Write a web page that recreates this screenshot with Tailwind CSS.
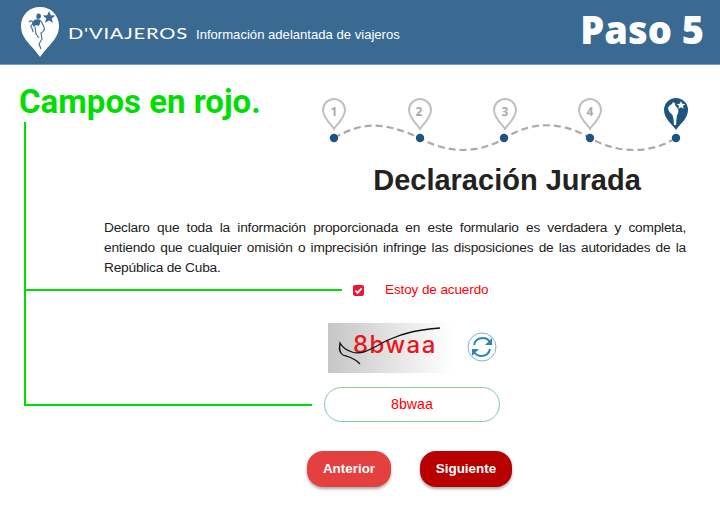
<!DOCTYPE html>
<html lang="es">
<head>
    <meta charset="UTF-8">
    <title>Paso 5</title>
    <script src="https://cdn.jsdelivr.net/npm/@tailwindcss/browser@4"></script>
</head>
<body class="bg-white w-[720px] h-[510px] overflow-hidden relative font-['Liberation_Sans',sans-serif]">
    <!-- header -->
    <header class="h-[65px] bg-[#3a6a92] border-b border-[#7f9db6] flex items-center pl-[20px] pr-[16px]">
        <svg class="w-[40px] h-[50px] shrink-0" viewBox="0 0 40 50">
            <path d="M20 0C9 0 1 8 1 19c0 8 4 13 9 19 4 4 7 8 10 12 3-4 6-8 10-12 5-6 9-11 9-19C39 8 31 0 20 0Z" fill="#fff"/>
            <path d="M29 4l1.800 4.200 4.400.3-3.400 2.900 1.100 4.400-3.900-2.400-3.900 2.400 1.100-4.400-3.400-2.900 4.400-.3Z" fill="#3a6a92"/>
            <path d="M17 7c2-1 4 0 4 2s-1 3-3 3-2-3-1-5ZM14 13c2-1 5-1 7 0l-2 6-3-1-2 2-2-3Z" fill="#3a6a92"/>
            <path d="M9 15c2-2 4-1 4 1s-3 2-2 4 2 2 2 5M21 14l3 6c1 3-1 5-3 6l1 6-3 5 2 5M15 20l1 7 3 4" fill="none" stroke="#3a6a92" stroke-width="1.100"/>
        </svg>
        <span class="mt-[4px] ml-[8px] text-[15.500px] leading-none tracking-[0.6px] text-white font-['Lato',sans-serif] scale-x-[1.3] origin-left w-[128px] shrink-0">D'VIAJEROS</span>
        <span class="mt-[5px] text-[13.100px] text-white">Información adelantada de viajeros</span>
        <span class="ml-auto mb-[6px] text-[38px] leading-none font-black text-white font-['Noto_Sans',sans-serif]">Paso 5</span>
    </header>

    <!-- contenido -->
    <main class="pt-[33px] pl-[104px] pr-[34px]">
        <svg class="block ml-[216px] w-[370px] h-[56px]" viewBox="320 98 370 56">
            <path d="M334 138C362 122 382 121 420 138C448 154 478 154 505 138C530 122 560 120 590 138C618 154 650 154 676 138" fill="none" stroke="#aaa" stroke-width="2.200" stroke-dasharray="7 4"/>
            <g fill="#fff" stroke="#c0c0c0" stroke-width="2">
                <path d="M334 129c-3-5-11-11-11-19a11 11 0 0 1 22 0c0 8-8 14-11 19Z"/>
                <path d="M420 129c-3-5-11-11-11-19a11 11 0 0 1 22 0c0 8-8 14-11 19Z"/>
                <path d="M505 129c-3-5-11-11-11-19a11 11 0 0 1 22 0c0 8-8 14-11 19Z"/>
                <path d="M590 129c-3-5-11-11-11-19a11 11 0 0 1 22 0c0 8-8 14-11 19Z"/>
            </g>
            <g fill="#aaa" font-family="Open Sans" font-weight="700" font-size="12" text-anchor="middle">
                <text x="334" y="116">1</text>
                <text x="419" y="116">2</text>
                <text x="505" y="116">3</text>
                <text x="590" y="116">4</text>
            </g>
            <path d="M676 130c-3-5-12-11-12-20a12 12 0 0 1 24 0c0 9-9 15-12 20Z" fill="#1f5480"/>
            <path d="M681 101l1.200 2.800 3 .2-2.300 1.900.8 2.900-2.700-1.600-2.700 1.600.8-2.900-2.300-1.900 3-.2Z" fill="#fff"/>
            <path d="M672 103c2-1 4 0 3 2l3 4c1 3 0 5-1 6l-.5 4-.5 6h-2l-.5-6-1-4-3-3c-1-2-2-4-1-5 1-2 3-2 4-4Z" fill="#fff"/>
            <g fill="#1f5480">
                <circle cx="334" cy="138" r="4.200"/>
                <circle cx="420" cy="138" r="4.200"/>
                <circle cx="504" cy="138" r="4.200"/>
                <circle cx="590" cy="138" r="4.200"/>
                <circle cx="676" cy="138" r="4.200"/>
            </g>
        </svg>

        <h1 class="mt-[9px] ml-[217px] w-[372px] text-center text-[29px] leading-[34px] font-bold text-[#222]">Declaración Jurada</h1>

        <p class="mt-[21px] text-[13.700px] tracking-[-0.2px] leading-[20px] text-[#222] text-justify">Declaro que toda la información proporcionada en este formulario es verdadera y completa, entiendo que cualquier omisión o imprecisión infringe las disposiciones de las autoridades de la República de Cuba.</p>

        <label class="mt-[2px] ml-[249px] flex items-center gap-[21px] h-[20px]">
            <span class="w-[11px] h-[11px] rounded-[2px] bg-[#f0142f] flex items-center justify-center">
                <svg class="w-[9px] h-[9px]" viewBox="0 0 10 10"><path d="M1.500 5.200l2.500 2.500 4.500-5" fill="none" stroke="#fff" stroke-width="2"/></svg>
            </span>
            <span class="text-[13.500px] tracking-[-0.1px] text-[#f00]">Estoy de acuerdo</span>
        </label>

        <div class="mt-[23px] ml-[224px] flex items-center gap-[15px]">
            <div class="relative w-[124px] h-[50px] bg-linear-to-r from-[#c6c6c6] to-white overflow-hidden">
                <span class="absolute left-[25px] top-[7px] text-[24px] leading-[30px] tracking-[1.400px] font-medium text-[#e8161e] font-['Inter',sans-serif]">8bwaa</span>
                <svg class="absolute inset-0 w-[124px] h-[50px]" viewBox="0 0 124 50">
                    <path d="M112 5C90 7 78 9 60 17C46 24 34 33 24 29C18 27 14 24 12 20C11 26 11 30 15 32C21 34 27 35 32 41" fill="none" stroke="#111" stroke-width="1.300"/>
                </svg>
            </div>
            <svg class="w-[30px] h-[30px] mb-[2px]" viewBox="0 0 30 30">
                <circle cx="15" cy="15" r="14" fill="#fff" stroke="#7db4d0" stroke-width="1"/>
                <path d="M7 13c1-5 5-7 9-7 3 0 5 1 7 4" fill="none" stroke="#2b86b8" stroke-width="2"/>
                <path d="M25 6v7h-7Z" fill="#2b86b8"/>
                <path d="M23 17c-1 5-5 7-9 7-3 0-5-1-7-4" fill="none" stroke="#2b86b8" stroke-width="2"/>
                <path d="M5 24v-7h7Z" fill="#2b86b8"/>
            </svg>
        </div>

        <div class="mt-[14px] ml-[220px] w-[176px] h-[35px] rounded-full border border-[#85cc9d] flex items-center justify-center text-[14.200px] text-[#f00]">8bwaa</div>

        <div class="mt-[29px] ml-[203px] flex gap-[29px]">
            <button class="w-[84px] h-[36px] rounded-[16px] bg-[#e54040] text-white text-[13.400px] font-bold shadow-[0_2px_3px_rgba(0,0,0,0.35)]">Anterior</button>
            <button class="w-[92px] h-[36px] rounded-[16px] bg-[#b90000] text-white text-[13.400px] font-bold shadow-[0_2px_3px_rgba(0,0,0,0.35)]">Siguiente</button>
        </div>
    </main>

    <!-- anotaciones -->
    <div class="absolute left-[19px] top-[81px] text-[33px] leading-[42px] font-bold text-[#00dd00] font-['Roboto',sans-serif]">Campos en rojo.</div>
    <div class="absolute left-[24px] top-[122px] w-[2px] h-[284px] bg-[#00dd00]"></div>
    <div class="absolute left-[24px] top-[289px] w-[318px] h-[2px] bg-[#00dd00]"></div>
    <div class="absolute left-[24px] top-[404px] w-[288px] h-[2px] bg-[#00dd00]"></div>
</body>
</html>
